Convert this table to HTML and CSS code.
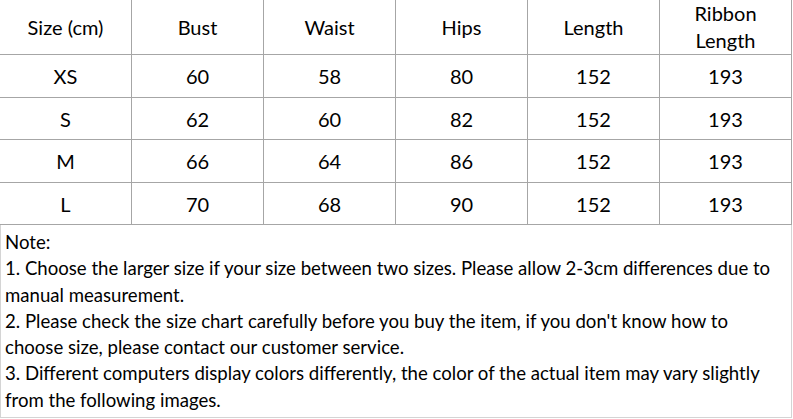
FILE: index.html
```html
<!DOCTYPE html>
<html lang="en">
<head>
<meta charset="utf-8">
<title>Size chart</title>
<link rel="stylesheet" href="styles.css">
</head>
<body>
<div class="sheet">
  <table class="chart">
    <thead>
      <tr class="row-head">
        <th>Size (cm)</th>
        <th>Bust</th>
        <th>Waist</th>
        <th>Hips</th>
        <th>Length</th>
        <th><div class="two-line">Ribbon<br>Length</div></th>
      </tr>
    </thead>
    <tbody>
      <tr class="row-a"><td>XS</td><td>60</td><td>58</td><td>80</td><td>152</td><td>193</td></tr>
      <tr class="row-b"><td>S</td><td>62</td><td>60</td><td>82</td><td>152</td><td>193</td></tr>
      <tr class="row-a"><td>M</td><td>66</td><td>64</td><td>86</td><td>152</td><td>193</td></tr>
      <tr class="row-b"><td>L</td><td>70</td><td>68</td><td>90</td><td>152</td><td>193</td></tr>
    </tbody>
  </table>
  <div class="notes">
    <p class="line">Note:</p>
    <p class="line">1. Choose the larger size if your size between two sizes. Please allow 2-3cm differences due to</p>
    <p class="line">manual measurement.</p>
    <p class="line">2. Please check the size chart carefully before you buy the item, if you don't know how to</p>
    <p class="line">choose size, please contact our customer service.</p>
    <p class="line">3. Different computers display colors differently, the color of the actual item may vary slightly</p>
    <p class="line">from the following images.</p>
  </div>
</div>
</body>
</html>
```
FILE: styles.css
```css
html, body {
  margin: 0;
  padding: 0;
  background: #ffffff;
}

.sheet {
  width: 792px;
  font-family: Lato, "Open Sans", sans-serif;
  color: #000000;
}

.chart {
  border-collapse: separate;
  border-spacing: 0;
  table-layout: fixed;
  width: 792px;
  font-size: 20px;
}

.chart th,
.chart td {
  width: 131px;
  padding: 0;
  border-right: 1px solid #a6a6a6;
  border-bottom: 1px solid #a6a6a6;
  text-align: center;
  vertical-align: middle;
  font-weight: normal;
  line-height: 24px;
}

.row-head th {
  height: 54px;
}

.two-line {
  height: 54px;
  line-height: 27px;
}

.row-a td {
  height: 42px;
}

.row-b td {
  height: 41px;
}

.notes {
  height: 193px;
  box-sizing: border-box;
  border-left: 1px solid #d4d4d4;
  border-right: 1px solid #d4d4d4;
  border-bottom: 1px solid #d4d4d4;
  padding: 4px 0 0 4px;
  font-size: 18.6px;
}

.line {
  margin: 0;
  line-height: 26.3px;
  white-space: nowrap;
}
```
